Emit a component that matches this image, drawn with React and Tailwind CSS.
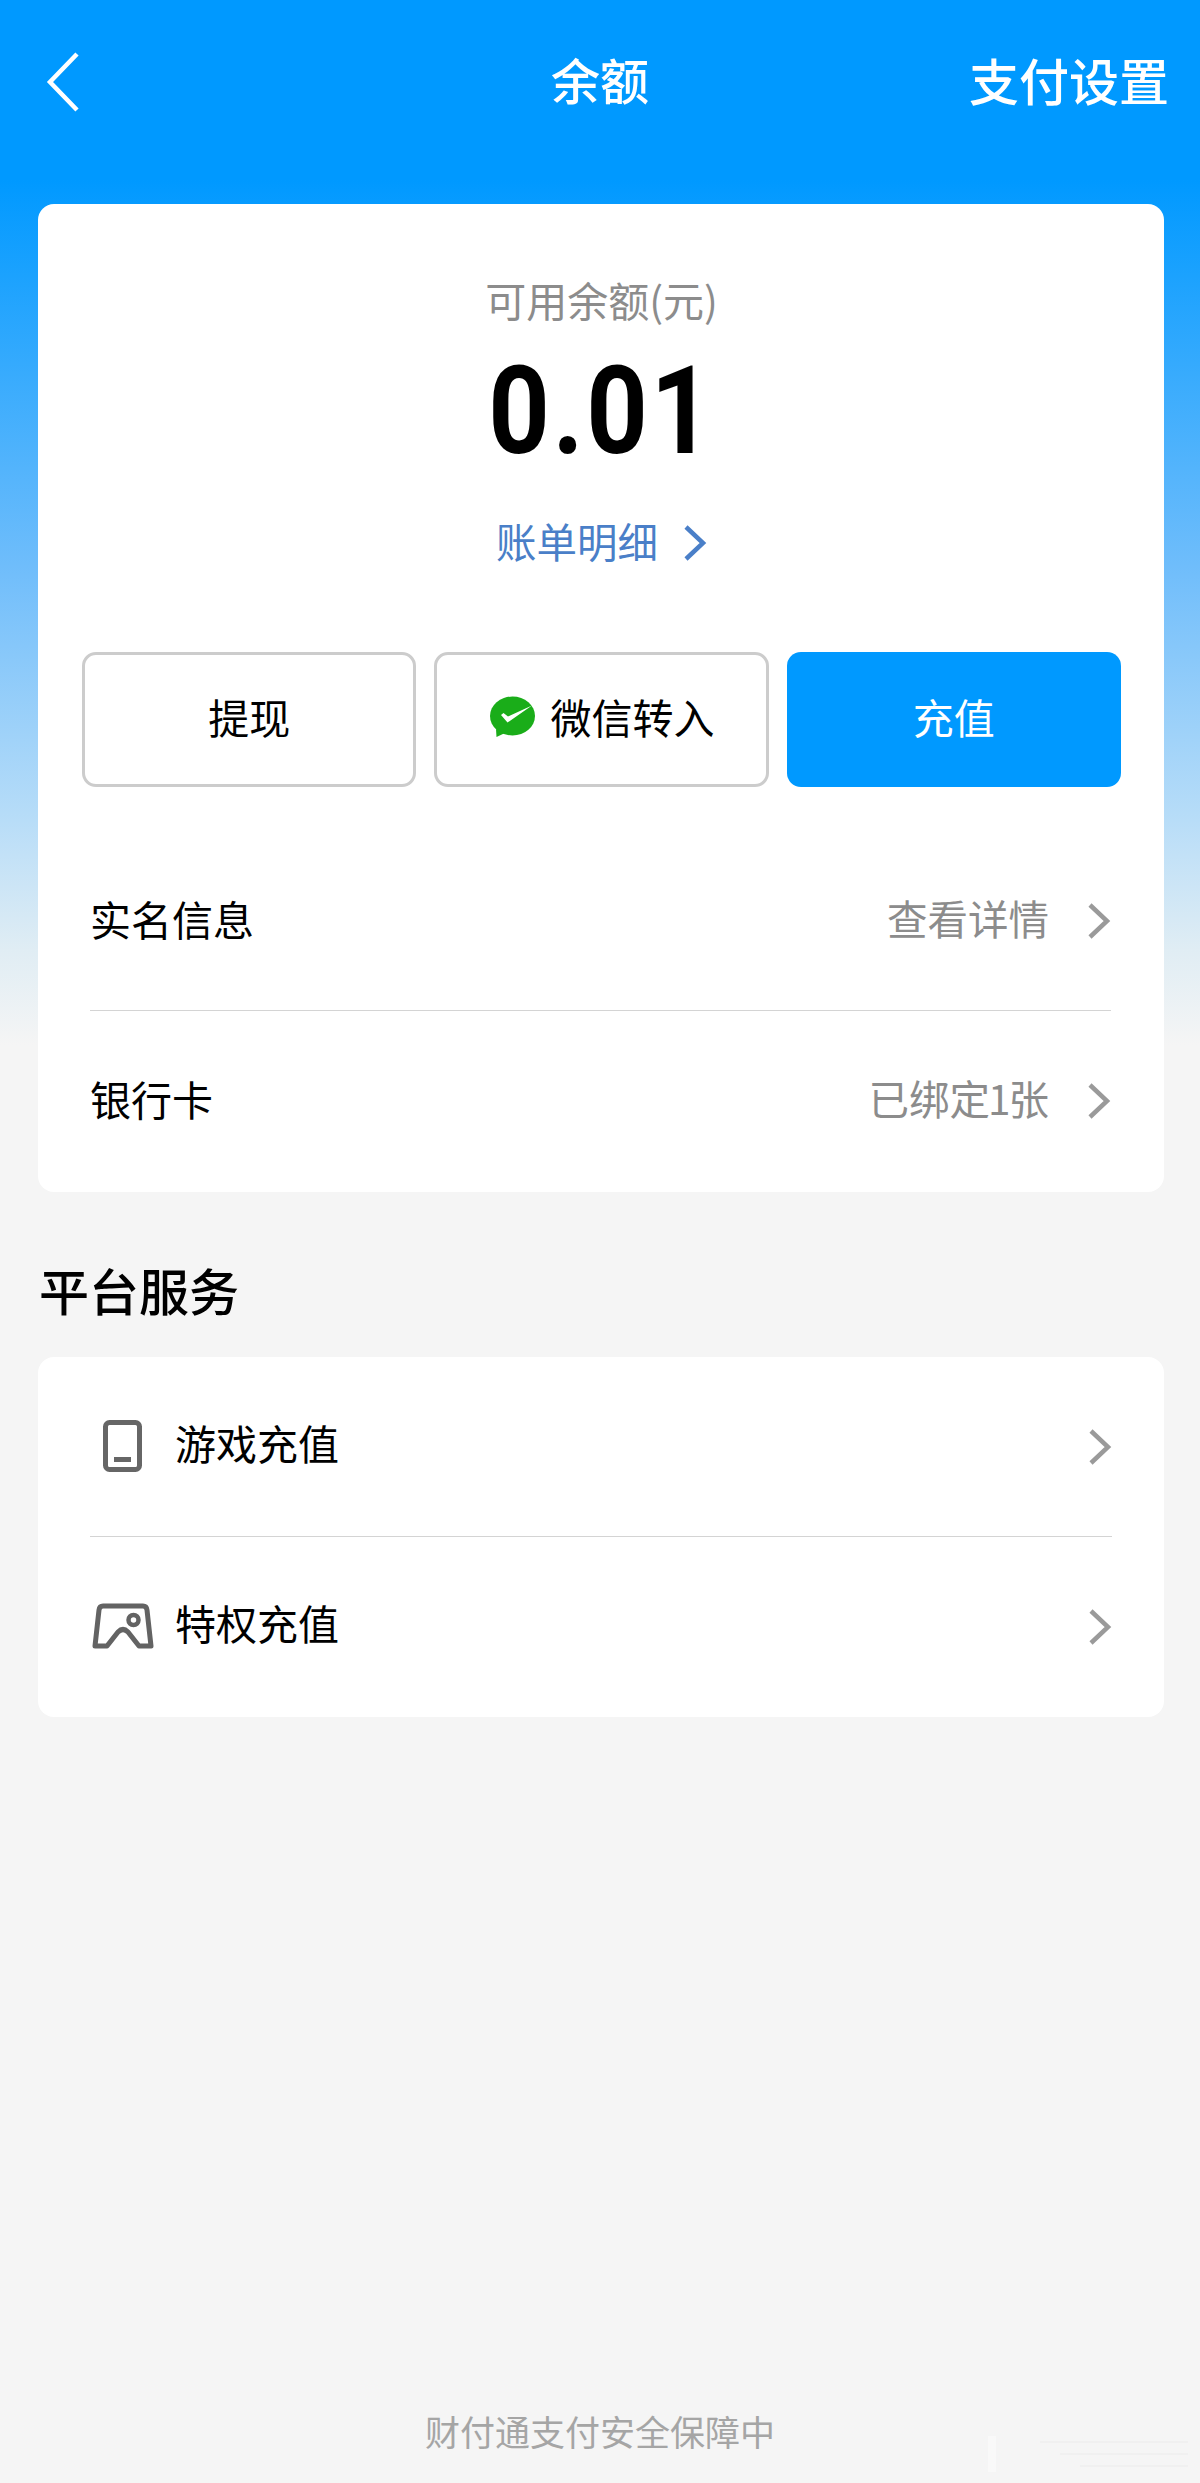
import React from "react";

const cjk = { fontFamily: '"Noto Sans CJK SC", "Noto Sans", sans-serif' };

const Chevron = ({ color = "#9a9a9a", className = "" }) => (
  <svg width="24" height="38" viewBox="0 0 24 38" fill="none" className={className}>
    <path d="M3 3 L20 19 L3 35" stroke={color} strokeWidth="4.500" strokeLinejoin="miter" />
  </svg>
);

const WechatIcon = () => (
  <svg width="48" height="44" viewBox="0 0 48 44" className="shrink-0">
    <ellipse cx="24.500" cy="21" rx="22.500" ry="19.500" fill="#1aad19" />
    <path d="M8 34 L8.500 42 L17 38 Z" fill="#1aad19" />
    <path d="M13 20 L19.500 27.500 L44 10.500 L20 21.500 L15.500 18 Z" fill="#ffffff" />
  </svg>
);

const PhoneIcon = () => (
  <svg width="66" height="56" viewBox="0 0 66 56" fill="none" className="shrink-0">
    <rect x="15.500" y="3.500" width="34" height="47" rx="4" stroke="#666666" strokeWidth="5" />
    <rect x="24" y="38" width="17" height="5" fill="#666666" />
  </svg>
);

const PadIcon = () => (
  <svg width="66" height="52" viewBox="0 0 66 52" fill="none" className="shrink-0">
    <path d="M13 5 H53 Q56.500 5 57 9 L61 45 H49 L38 31 Q33 26 28 31 L17 45 H5 L9 9 Q9.500 5 13 5 Z" stroke="#636363" strokeWidth="5" strokeLinejoin="round" />
    <circle cx="43.500" cy="19" r="5" stroke="#636363" strokeWidth="4.500" />
  </svg>
);

const Row = ({ icon, label, value, border }) => (
  <div className={`flex h-[180px] items-center ${border ? "border-b border-[#d4d4d4]" : ""}`}>
    {icon && <div className="w-[85px]">{icon}</div>}
    <span className={`text-[41px] leading-[56px] text-black ${icon ? "pb-[10px]" : "pb-[6px]"}`}>{label}</span>
    <div className="ml-auto flex items-center">
      {value && <span className="pb-[6px] text-[40.500px] leading-[56px] text-[#8c8c8c]">{value}</span>}
      <Chevron className="ml-[38px]" />
    </div>
  </div>
);

export default function App() {
  return (
    <div
      style={cjk}
      className="relative flex min-h-[2483px] w-[1200px] flex-col bg-[linear-gradient(#0099ff_0px,#0099ff_180px,#6fbdfb_566px,#b8ddf8_821px,#e0edf4_950px,#f5f5f5_1045px)]"
    >
      {/* header */}
      <div className="grid h-[164px] grid-cols-[1fr_auto_1fr] items-center px-[33px] text-white">
        <svg width="36" height="62" viewBox="0 0 36 62" fill="none" className="ml-[12px]">
          <path d="M32 3 L5 31 L32 59" stroke="#ffffff" strokeWidth="4.500" />
        </svg>
        <div className="pb-[6px] text-[49px] font-medium leading-[64px]">余额</div>
        <div className="-mr-[2px] pb-[6px] text-right text-[50px] font-medium leading-[64px]">支付设置</div>
      </div>

      {/* balance card */}
      <div className="ml-[38px] mr-[36px] mt-[40px] rounded-[16px] bg-white pb-[1px] pl-[44px] pr-[43px] pt-[67px]">
        <div className="text-center text-[41px] leading-[56px] text-[#8c8c8c]">可用余额(元)</div>
        <div
          style={{ fontFamily: "Roboto, sans-serif" }}
          className="mt-[25px] scale-x-[0.88] text-center text-[122px] font-bold leading-[120px] tracking-[3px] text-black"
        >
          0.01
        </div>
        <div className="mt-[41px] flex items-center justify-center leading-[56px]">
          <span className="text-[40.500px] text-[#4a7fc8]">账单明细</span>
          <Chevron color="#4a7fc8" className="ml-[25px] mt-[3px]" />
        </div>

        <div className="mt-[83px] grid grid-cols-3 gap-[18px]">
          <button className="flex h-[135px] items-center justify-center rounded-[14px] border-[3px] border-[#cccccc] bg-white pb-[5px] text-[41px] text-black">
            提现
          </button>
          <button className="flex h-[135px] items-center justify-center gap-[14px] rounded-[14px] border-[3px] border-[#cccccc] bg-white pb-[5px] text-[41px] text-black">
            <WechatIcon />
            微信转入
          </button>
          <button className="flex h-[135px] items-center justify-center rounded-[14px] bg-[#0099ff] pb-[5px] text-[41px] text-white">
            充值
          </button>
        </div>

        <div className="ml-[8px] mr-[10px] mt-[44px]">
          <Row label="实名信息" value="查看详情" border />
          <Row label="银行卡" value={<>已绑定<span className="-mx-[2px]">1</span>张</>} />
        </div>
      </div>

      {/* platform services */}
      <div className="ml-[39px] mt-[62px] text-[50px] font-medium leading-[70px] text-black">平台服务</div>
      <div className="ml-[38px] mr-[36px] mt-[33px] rounded-[16px] bg-white pl-[52px] pr-[52px]">
        <Row icon={<PhoneIcon />} label="游戏充值" border />
        <Row icon={<PadIcon />} label="特权充值" />
      </div>

      {/* footer */}
      <div className="mt-auto pb-[24px] text-center text-[35px] leading-[56px] text-[#a5a5a5]">财付通支付安全保障中</div>

      {/* faint watermark corner */}
      <svg width="210" height="36" viewBox="0 0 210 36" fill="none" className="absolute bottom-[11px] right-[10px]">
        <path d="M12 0 V36" stroke="#f9f9f9" strokeWidth="8" />
        <path d="M60 6 H208 M80 18 H208 M100 30 H208" stroke="#eeeeee" strokeWidth="1.500" />
      </svg>
    </div>
  );
}
